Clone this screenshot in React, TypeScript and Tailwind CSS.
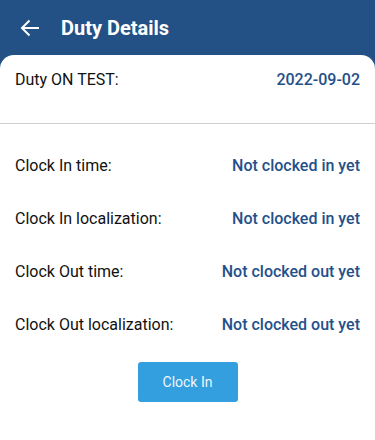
import React from 'react';

const rows = [
  { label: 'Clock In time:', value: 'Not clocked in yet' },
  { label: 'Clock In localization:', value: 'Not clocked in yet' },
  { label: 'Clock Out time:', value: 'Not clocked out yet' },
  { label: 'Clock Out localization:', value: 'Not clocked out yet' },
];

const App: React.FC = () => {
  return (
    <div className="w-[375px] h-[440px] bg-[#235185] font-['Roboto',sans-serif] overflow-hidden flex flex-col">
      {/* Header */}
      <div className="h-[55px] shrink-0 flex items-center pl-[20px] gap-[21px] text-white">
        <svg width="20" height="20" viewBox="0 0 20 20" fill="none" stroke="currentColor" strokeWidth="2">
          <path d="M19 10H2" />
          <path d="M9.5 2.5L2 10l7.5 7.5" />
        </svg>
        <h1 className="text-[20px] font-bold leading-none">Duty Details</h1>
      </div>

      {/* Card */}
      <div className="flex-1 bg-white rounded-t-[14px] flex flex-col">
        <div className="h-[69px] flex items-start justify-between px-[15px] pt-[14px] text-[16px] leading-[22px] border-b border-[#cfcfcf]">
          <span className="text-[#111]">Duty ON TEST:</span>
          <span className="text-[#24508a] font-medium">2022-09-02</span>
        </div>

        <div className="flex flex-col gap-[31px] pt-[31px]">
          {rows.map((r) => (
            <div key={r.label} className="h-[22px] flex items-center justify-between px-[15px] text-[16px] leading-[22px]">
              <span className="text-[#111]">{r.label}</span>
              <span className="text-[#24508a] font-medium">{r.value}</span>
            </div>
          ))}
        </div>

        <div className="flex justify-center mt-[26px]">
          <button className="w-[100px] h-[40px] rounded-[3px] bg-[#349fdf] text-[#eef6fc] text-[14px]">
            Clock In
          </button>
        </div>
      </div>
    </div>
  );
};

export default App;
